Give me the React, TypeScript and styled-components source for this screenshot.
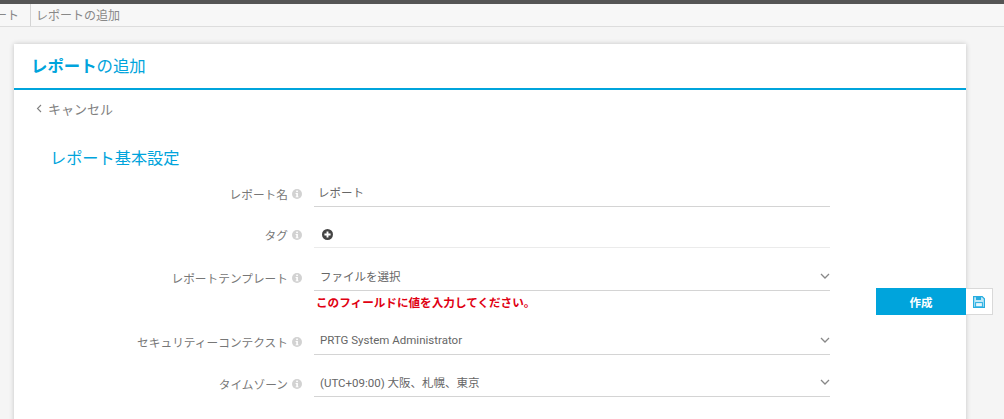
import React from "react";
import styled, { createGlobalStyle } from "styled-components";

const GlobalStyle = createGlobalStyle`
  html, body {
    margin: 0;
    padding: 0;
    height: 100%;
    overflow: hidden;
    background: #f5f5f5;
    font-family: "Open Sans", "Noto Sans CJK JP", sans-serif;
  }
`;

const Page = styled.div`
  width: 1004px;
  height: 419px;
  position: relative;
  overflow: hidden;
  background: #f5f5f5;
`;

const TopBar = styled.div`
  height: 4px;
  background: #555555;
  box-shadow: 0 1px 2px rgba(0, 0, 0, 0.25);
`;

const Breadcrumbs = styled.div`
  height: 22px;
  display: flex;
  align-items: stretch;
  background: #f7f7f7;
  border-bottom: 1px solid #dddddd;
  font-size: 12px;
  color: #888888;
  white-space: nowrap;
`;

const Crumb = styled.div<{ $clip?: boolean }>`
  display: flex;
  align-items: center;
  padding: 0 5px;
  ${(p) => p.$clip && `
    width: 31px;
    box-sizing: border-box;
    justify-content: flex-end;
    padding: 0 11px 0 0;
    border-right: 1px solid #d4d4d4;
    overflow: hidden;
  `}
`;

const Card = styled.main`
  width: 952px;
  margin: 17px 0 0 14px;
  background: #ffffff;
  box-shadow: 0 0 5px rgba(0, 0, 0, 0.2);
`;

const CardHeader = styled.header`
  padding: 0 0 3px 17px;
  box-sizing: border-box;
  height: 46px;
  display: flex;
  align-items: center;
  border-bottom: 2px solid #00a4dc;
  font-size: 16.4px;
  color: #00a4dc;
  strong {
    font-weight: 700;
  }
`;

const CancelLink = styled.a`
  display: flex;
  align-items: center;
  gap: 6px;
  margin: 10px 0 0 22px;
  height: 17px;
  font-size: 13px;
  color: #808080;
`;

const SectionTitle = styled.h2`
  margin: 29px 0 0 36px;
  height: 24px;
  line-height: 24px;
  font-size: 16.2px;
  font-weight: 400;
  color: #00a4dc;
`;

const Form = styled.form`
  display: flex;
  flex-direction: column;
  margin-top: 10px;
`;

const Row = styled.div<{ $height: number }>`
  display: grid;
  grid-template-columns: 300px 516px;
  height: ${(p) => p.$height}px;
`;

const Label = styled.label`
  display: flex;
  align-items: center;
  justify-content: flex-end;
  gap: 4px;
  height: 27px;
  padding-right: 12px;
  font-size: 11.7px;
  color: #777777;
`;

const Field = styled.div<{ $inset?: number }>`
  height: 27px;
  box-sizing: border-box;
  display: flex;
  align-items: center;
  justify-content: space-between;
  padding: 0 0 2px ${(p) => p.$inset ?? 6}px;
  border-bottom: 1px solid #d4d4d4;
  font-family: Roboto, "Noto Sans CJK JP", sans-serif;
  font-size: 11.5px;
  color: #666666;
`;

const TagField = styled(Field)`
  border-bottom-color: #ebebeb;
  padding-left: 8px;
  padding-bottom: 0;
`;

const IconField = styled.div`
  height: 27px;
  padding: 5px 0 0 7px;
  box-sizing: border-box;
`;

const ErrorText = styled.div`
  margin: 5px 0 0 2px;
  font-size: 11.6px;
  font-weight: 700;
  line-height: 14px;
  color: #e00012;
`;

const SaveBar = styled.div`
  position: absolute;
  left: 876px;
  top: 288px;
  display: flex;
  height: 27px;
`;

const SaveButton = styled.button`
  width: 90px;
  border: 0;
  padding: 0;
  background: #00a4dc;
  color: #ffffff;
  font-family: inherit;
  font-size: 11.5px;
  font-weight: 700;
`;

const SaveIcon = styled.div`
  width: 27px;
  box-sizing: border-box;
  display: flex;
  align-items: center;
  justify-content: center;
  background: #ffffff;
  border: 1px solid #d9d9d9;
  border-left: 0;
`;

const InfoIcon = () => (
  <svg width="10" height="10" viewBox="0 0 10 10">
    <circle cx="5" cy="5" r="5" fill="#d2d2d2" />
    <rect x="4.2" y="1.6" width="1.7" height="1.5" fill="#fff" />
    <path d="M3.6 4h2.3v3.4h.7v.9H3.6v-.9h.7V4.9h-.7z" fill="#fff" />
  </svg>
);

const Chevron = () => (
  <svg width="10" height="6" viewBox="0 0 10 6">
    <path d="M1 1l4 4 4-4" fill="none" stroke="#888" strokeWidth="1.3" />
  </svg>
);

const BackChevron = () => (
  <svg width="6" height="9" viewBox="0 0 6 9">
    <path d="M5 1L1.5 4.5 5 8" fill="none" stroke="#808080" strokeWidth="1.1" />
  </svg>
);

const PlusIcon = () => (
  <svg width="11" height="11" viewBox="0 0 10 10">
    <circle cx="5" cy="5" r="5" fill="#444" />
    <path d="M5 2.2v5.6M2.2 5h5.6" stroke="#fff" strokeWidth="1.7" />
  </svg>
);

const RingIcon = () => (
  <svg width="13" height="13" viewBox="0 0 13 13">
    <circle cx="6.5" cy="6.5" r="5.8" fill="none" stroke="#555" strokeWidth="1.2" />
  </svg>
);

const FloppyIcon = () => (
  <svg width="12" height="12" viewBox="0 0 12 12">
    <path
      d="M.6.6h8.6l2.2 2.2v8.6H.6z"
      fill="#bfe8f7"
      stroke="#27ade0"
      strokeWidth="1.2"
    />
    <rect x="3" y="1" width="5" height="3" fill="#27ade0" />
    <rect x="2.6" y="6.6" width="6.8" height="4.2" fill="#e8f7fc" stroke="#27ade0" />
  </svg>
);

const FormRow = ({
  label,
  height,
  children,
}: {
  label: string;
  height: number;
  children: React.ReactNode;
}) => (
  <Row $height={height}>
    <Label>
      {label}
      <InfoIcon />
    </Label>
    <div>{children}</div>
  </Row>
);

export default function App() {
  return (
    <Page>
      <GlobalStyle />
      <TopBar />
      <Breadcrumbs>
        <Crumb $clip>レポート</Crumb>
        <Crumb>レポートの追加</Crumb>
      </Breadcrumbs>
      <Card>
        <CardHeader>
          <span>
            <strong>レポート</strong>の追加
          </span>
        </CardHeader>
        <CancelLink>
          <BackChevron />
          キャンセル
        </CancelLink>
        <SectionTitle>レポート基本設定</SectionTitle>
        <Form>
          <FormRow label="レポート名" height={41}>
            <Field $inset={4}>レポート</Field>
          </FormRow>
          <FormRow label="タグ" height={43}>
            <TagField>
              <PlusIcon />
            </TagField>
          </FormRow>
          <FormRow label="レポートテンプレート" height={64}>
            <Field>
              <span>ファイルを選択</span>
              <Chevron />
            </Field>
            <ErrorText>このフィールドに値を入力してください。</ErrorText>
          </FormRow>
          <FormRow label="セキュリティーコンテクスト" height={42}>
            <Field>
              <span>PRTG System Administrator</span>
              <Chevron />
            </Field>
          </FormRow>
          <FormRow label="タイムゾーン" height={42}>
            <Field>
              <span>(UTC+09:00) 大阪、札幌、東京</span>
              <Chevron />
            </Field>
          </FormRow>
          <Row $height={40}>
            <div />
            <IconField>
              <RingIcon />
            </IconField>
          </Row>
        </Form>
      </Card>
      <SaveBar>
        <SaveButton>作成</SaveButton>
        <SaveIcon>
          <FloppyIcon />
        </SaveIcon>
      </SaveBar>
    </Page>
  );
}
